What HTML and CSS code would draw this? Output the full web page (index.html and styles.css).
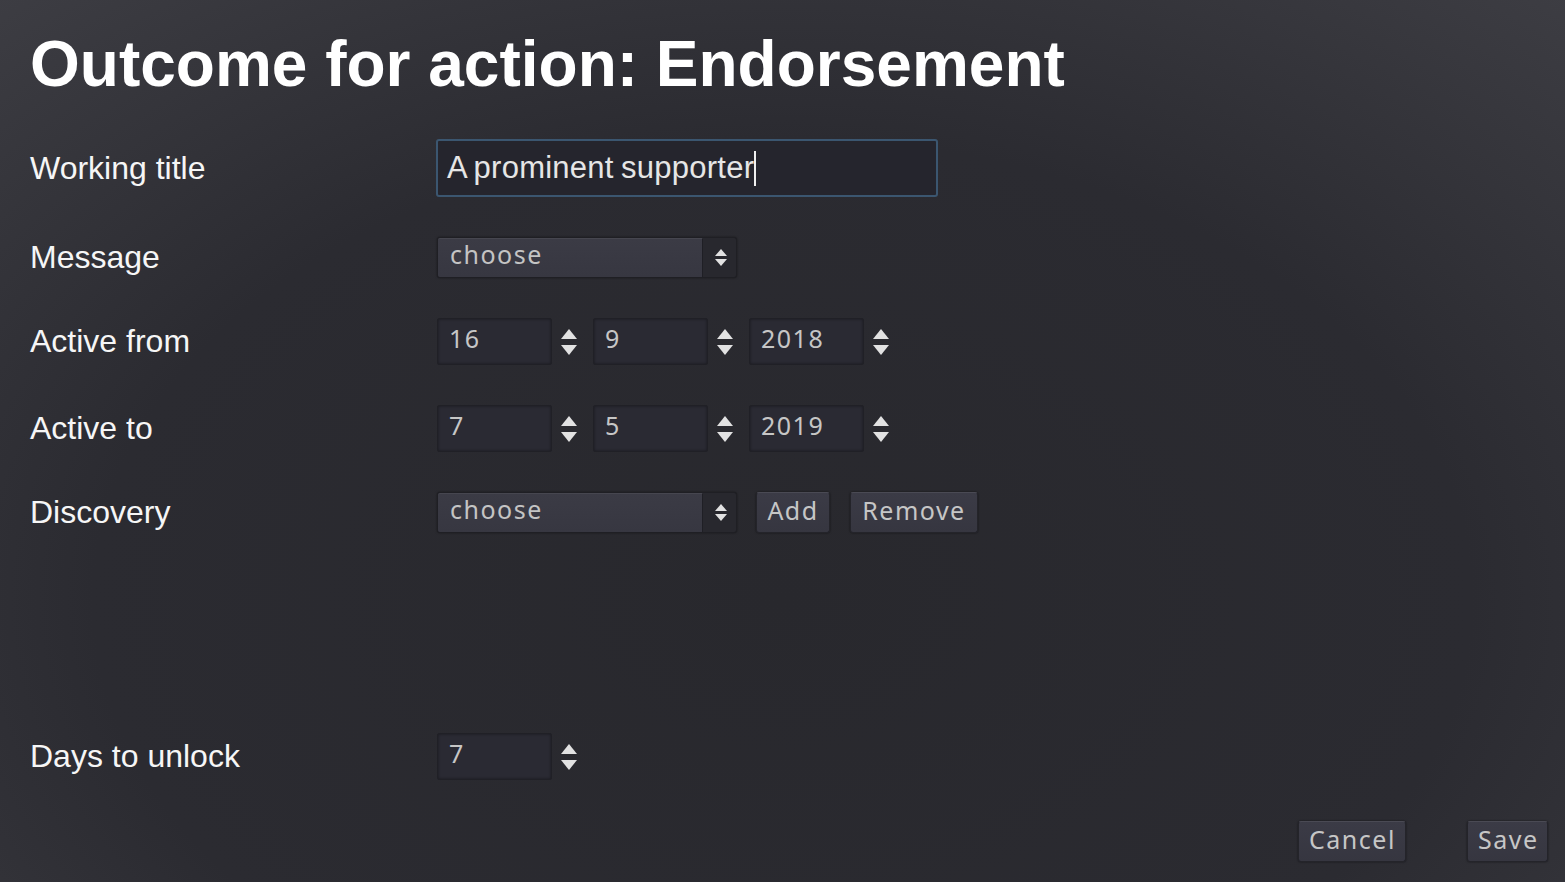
FILE: index.html
```html
<!DOCTYPE html>
<html>
<head>
<meta charset="utf-8">
<link rel="stylesheet" href="styles.css">
</head>
<body>
<div class="page">
  <h1 class="title">Outcome for action: Endorsement</h1>
  <div class="form">
    <div class="row row-title">
      <div class="label">Working title</div>
      <div class="text-input"><span class="text-value">A prominent supporter</span><span class="caret"></span></div>
    </div>
    <div class="row row-select">
      <div class="label">Message</div>
      <div class="select"><span class="select-main">choose</span><span class="select-arrow"><span class="tri-up small"></span><span class="tri-down small"></span></span></div>
    </div>
    <div class="row row-spin">
      <div class="label">Active from</div>
      <div class="spin-group">
        <div class="spin"><span class="spin-box">16</span><span class="spin-arrows"><span class="tri-up"></span><span class="tri-down"></span></span></div>
        <div class="spin"><span class="spin-box">9</span><span class="spin-arrows"><span class="tri-up"></span><span class="tri-down"></span></span></div>
        <div class="spin"><span class="spin-box">2018</span><span class="spin-arrows"><span class="tri-up"></span><span class="tri-down"></span></span></div>
      </div>
    </div>
    <div class="row row-spin">
      <div class="label">Active to</div>
      <div class="spin-group">
        <div class="spin"><span class="spin-box">7</span><span class="spin-arrows"><span class="tri-up"></span><span class="tri-down"></span></span></div>
        <div class="spin"><span class="spin-box">5</span><span class="spin-arrows"><span class="tri-up"></span><span class="tri-down"></span></span></div>
        <div class="spin"><span class="spin-box">2019</span><span class="spin-arrows"><span class="tri-up"></span><span class="tri-down"></span></span></div>
      </div>
    </div>
    <div class="row row-select">
      <div class="label">Discovery</div>
      <div class="select"><span class="select-main">choose</span><span class="select-arrow"><span class="tri-up small"></span><span class="tri-down small"></span></span></div>
      <button class="btn btn-add">Add</button>
      <button class="btn btn-remove">Remove</button>
    </div>
    <div class="row row-spin row-days">
      <div class="label">Days to unlock</div>
      <div class="spin"><span class="spin-box">7</span><span class="spin-arrows"><span class="tri-up"></span><span class="tri-down"></span></span></div>
    </div>
  </div>
  <div class="actions">
    <button class="btn btn-cancel">Cancel</button>
    <button class="btn btn-save">Save</button>
  </div>
</div>
</body>
</html>
```

FILE: styles.css
```css
html, body {
  margin: 0;
  padding: 0;
  height: 100%;
}
body {
  width: 1565px;
  height: 882px;
  overflow: hidden;
  background: radial-gradient(ellipse 80% 95% at 50% 68%, #28282d 0%, #2b2b31 55%, #3f3f45 100%);
  color: #f4f4f4;
  font-family: "Liberation Sans", Arial, sans-serif;
}
.page {
  padding: 32px 17px 0 30px;
}
.title {
  margin: 0;
  font-size: 64px;
  line-height: 64px;
  font-weight: bold;
  color: #ffffff;
}
.form {
  margin-top: 43px;
  display: flex;
  flex-direction: column;
  gap: 40px;
}
.row {
  display: flex;
  align-items: center;
}
.row-title { height: 58px; }
.row-select { height: 41px; }
.row-spin { height: 47px; }
.row-days { margin-top: 160px; }
.label {
  width: 406px;
  flex: none;
  font-size: 32px;
  color: #f6f6f6;
}
.text-input {
  width: 489px;
  height: 54px;
  border: 2px solid #3b5670;
  border-radius: 3px;
  background: #25252d;
  display: flex;
  align-items: center;
  padding-left: 9px;
  box-sizing: content-box;
}
.text-value {
  font-size: 31px;
  color: #e6e6e6;
  letter-spacing: 0.25px;
  word-spacing: -1.5px;
}
.caret {
  width: 2px;
  height: 35px;
  background: #f0f0f0;
  margin-left: 0;
}
.select-main, .spin-box, .btn {
  font-family: "Noto Sans", "DejaVu Sans", sans-serif;
}
.select {
  margin-left: 1px;
  display: flex;
  height: 41px;
  width: 300px;
  box-sizing: border-box;
  border: 1px solid #1f1f24;
  border-radius: 3px;
  background: #28282e;
  box-shadow: 0 0 2px rgba(0,0,0,0.5);
}
.select-main {
  width: 265px;
  box-sizing: border-box;
  background: linear-gradient(#3b3b45, #373741);
  border-right: 1px solid #1f1f25;
  border-top: 1px solid #46464f;
  font-size: 25px;
  letter-spacing: 1.5px;
  color: #c4c4c4;
  padding-left: 12px;
  line-height: 31px;
  border-radius: 2px 0 0 2px;
}
.select-arrow {
  flex: 1;
  display: flex;
  flex-direction: column;
  align-items: center;
  justify-content: center;
  gap: 3px;
  padding-left: 2px;
}
.tri-up, .tri-down {
  width: 0;
  height: 0;
  border-left: 8px solid transparent;
  border-right: 8px solid transparent;
}
.tri-up { border-bottom: 10px solid #e2e2e2; }
.tri-down { border-top: 10px solid #e2e2e2; }
.tri-up.small {
  border-left-width: 6px;
  border-right-width: 6px;
  border-bottom-width: 7px;
}
.tri-down.small {
  border-left-width: 6px;
  border-right-width: 6px;
  border-top-width: 7px;
}
.spin-group {
  display: flex;
  gap: 16px;
}
.spin {
  display: flex;
  align-items: center;
  gap: 9px;
  margin-left: 1px;
}
.spin-group .spin { margin-left: 0; }
.spin-group .spin:first-child { margin-left: 1px; }
.spin-box {
  width: 115px;
  height: 47px;
  box-sizing: border-box;
  background: #2a2a33;
  border: 1px solid #202026;
  border-radius: 2px;
  box-shadow: inset 0 0 3px rgba(0,0,0,0.45);
  font-size: 25px;
  letter-spacing: 1.5px;
  color: #c6c6c6;
  padding-left: 11px;
  line-height: 38px;
}
.spin-arrows {
  display: flex;
  flex-direction: column;
  align-items: center;
  gap: 6px;
  width: 16px;
}
.btn {
  height: 41px;
  box-sizing: border-box;
  background: linear-gradient(#3b3b46, #363640);
  border: 1px solid #24242a;
  border-top-color: #4a4a54;
  border-radius: 3px;
  box-shadow: 0 0 2px rgba(0,0,0,0.6);
  color: #c6c6c6;
  font-size: 25px;
  letter-spacing: 1.5px;
  padding: 0 10px 5px;
  line-height: 31px;
}
.btn-add { margin-left: 19px; width: 74px; }
.btn-remove { margin-left: 20px; width: 128px; }
.actions {
  margin-top: 41px;
  display: flex;
  justify-content: flex-end;
  gap: 61px;
}
.btn-cancel { width: 108px; }
.btn-save { width: 81px; }
```
